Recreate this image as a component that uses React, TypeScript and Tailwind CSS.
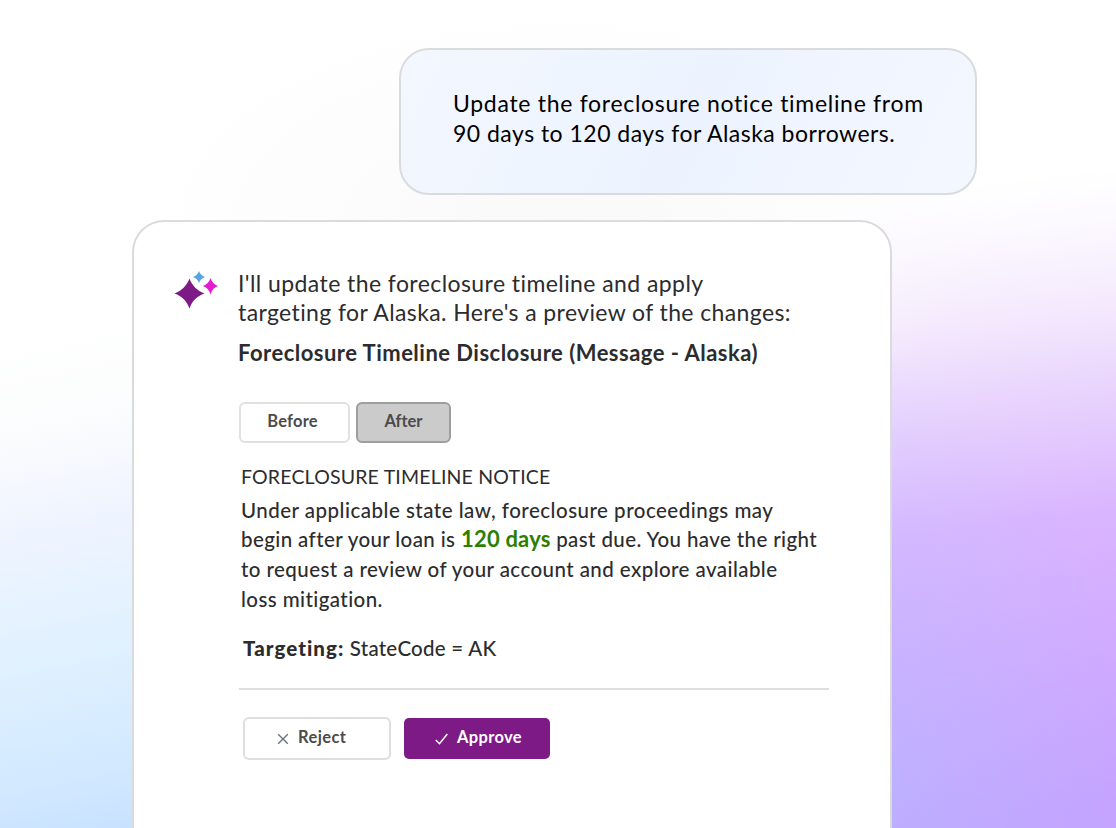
import React, { ReactNode } from 'react';

interface LineProps {
  className?: string;
  children: ReactNode;
}

const Line = ({ className = '', children }: LineProps) => (
  <span className={`block w-max whitespace-nowrap ${className}`}>
    {children}
  </span>
);

const SparkleIcon = () => (
  <svg
    className="mt-[48px] h-[39px] w-[45px] shrink-0"
    viewBox="0 0 45 39"
    fill="none"
  >
    <path
      d="M15.5 8.500C17.800 15 23 20.700 30.500 23.500C23 26 17.800 31.500 15.500 38.500C13 31.500 8 26 .5 23.500C8 20.700 13 15 15.500 8.500Z"
      fill="#7d1a86"
    />
    <path
      d="M25 1C26 4 28 6 31 7C28 8 26 10 25 13C24 10 22 8 19 7C22 6 24 4 25 1Z"
      fill="#55a5df"
    />
    <path
      d="M36.500 8C37.700 11.700 40.300 14.800 44 16C40.300 17.200 37.700 20.300 36.500 24.500C35.300 20.300 32.700 17.200 29 16C32.700 14.800 35.300 11.700 36.500 8Z"
      fill="#e41bd0"
    />
  </svg>
);

const CloseIcon = () => (
  <svg className="h-3 w-3" viewBox="0 0 12 12" fill="none">
    <path
      d="M1.200 1.200L10.800 10.800M10.800 1.200L1.200 10.800"
      stroke="#6b7280"
      strokeWidth="1.400"
    />
  </svg>
);

const CheckIcon = () => (
  <svg className="h-3 w-[13px]" viewBox="0 0 13 12" fill="none">
    <path d="M.8 7L4.500 10.700L12.300 1" stroke="#fff" strokeWidth="1.500" />
  </svg>
);

const UserMessage = () => (
  <div className="ml-[399px] h-[147px] w-[578px] rounded-[30px] border-2 border-[#dadbdd] bg-[linear-gradient(115deg,#f3f7ff_0%,#eff5fe_30%,#ecf3fe_50%,#f1f5ff_75%,#f3f7ff_100%)] pt-[38px] pl-[52px] text-[23px] leading-[30px] text-black">
    <Line className="tracking-[0.700px]">
      Update the foreclosure notice timeline from
    </Line>
    <Line className="tracking-[0.480px]">
      90 days to 120 days for Alaska borrowers.
    </Line>
  </div>
);

const AssistantMessage = () => (
  <div className="mt-[25px] ml-[132px] flex h-[660px] w-[760px] rounded-t-[32px] border-2 border-b-0 border-[#dadbdd] bg-white pl-10 text-[#2c2c2e]">
    <SparkleIcon />
    <div className="ml-[19px] w-[592px] pt-[47px]">
      <div className="text-[23px] leading-[29px]">
        <Line className="tracking-[0.420px]">
          I'll update the foreclosure timeline and apply
        </Line>
        <Line className="tracking-[0.390px]">
          targeting for Alaska. Here's a preview of the changes:
        </Line>
      </div>
      <h2 className="mt-[11px] text-[22px] leading-[30px] font-bold tracking-[0.480px]">
        <Line>Foreclosure Timeline Disclosure (Message - Alaska)</Line>
      </h2>

      <div className="mt-[34px] ml-px flex gap-[6px] text-[16.500px] font-bold text-[#4b4b4d]">
        <button className="h-[41px] w-[111px] rounded-md border-2 border-[#e1e1e2] bg-white pr-1 pb-0.5 tracking-[0.200px]">
          Before
        </button>
        <button className="h-[41px] w-[95px] rounded-md border-2 border-[#9e9e9f] bg-[#cbcbcb] pb-0.5">
          After
        </button>
      </div>

      <div className="mt-[19px] ml-[3px] text-[20.500px] leading-[29.670px] font-medium">
        <Line className="mb-1 text-[19.500px] font-normal tracking-[0.180px]">
          FORECLOSURE TIMELINE NOTICE
        </Line>
        <Line className="tracking-[0.490px]">
          Under applicable state law, foreclosure proceedings may
        </Line>
        <Line className="tracking-[0.390px]">
          begin after your loan is{' '}
          <strong className="text-[22px] leading-none font-bold tracking-[0.200px] text-[#2c8000]">
            120 days
          </strong>{' '}
          past due. You have the right
        </Line>
        <Line className="tracking-[0.430px]">
          to request a review of your account and explore available
        </Line>
        <Line className="tracking-[0.420px]">loss mitigation.</Line>
      </div>

      <div className="mt-[19px] ml-[5px] text-[20.500px] leading-[30px] font-medium">
        <Line className="tracking-[0.250px]">
          <strong className="font-black tracking-[1.050px]">Targeting:</strong>{' '}
          StateCode = AK
        </Line>
      </div>

      <div className="mt-[25px] ml-px h-[2px] w-[590px] bg-[#dedede]" />

      <div className="mt-[27px] ml-[5px] flex gap-[13px] text-[16.500px] font-bold">
        <button className="flex h-[43px] w-[148px] items-center gap-[9px] rounded-md border-2 border-[#dedede] bg-white pl-8 text-[#4b4b4d]">
          <CloseIcon />
          <span className="pb-[3px] tracking-[0.400px]">Reject</span>
        </button>
        <button className="mt-px flex h-[41px] w-[146px] items-center gap-[9px] rounded-[5px] bg-[#7d1a86] pl-[31px] text-white">
          <CheckIcon />
          <span className="pb-[3px] tracking-[0.350px]">Approve</span>
        </button>
      </div>
    </div>
  </div>
);

const App = () => (
  <div className="flex h-[828px] w-[1116px] overflow-hidden bg-white bg-[image:radial-gradient(ellipse_280px_420px_at_0px_780px,#a8ccff55_0%,#a8ccff00_100%),linear-gradient(173deg,#ffffff_23%,#fcf9ff_29%,#f4e9fd_39%,#e6cffd_51%,#dab5ff_63%,#d2abff_77%,#c5a2ff_97%),linear-gradient(168deg,#ffffff_38%,#fbfcfd_49%,#eff4ff_60%,#def0ff_77%,#cfe7ff_91%,#c2dcff_100%)] bg-[size:260px_100%,260px_100%,300px_100%] bg-[position:right_top,right_top,left_top] bg-no-repeat font-[Lato,sans-serif]">
    <main className="w-full bg-[radial-gradient(ellipse_430px_230px_at_560px_230px,#f9f9fa_0%,#ffffff00_100%)] pt-[48px] [font-variant-ligatures:none]">
      <UserMessage />
      <AssistantMessage />
    </main>
  </div>
);

export default App;
